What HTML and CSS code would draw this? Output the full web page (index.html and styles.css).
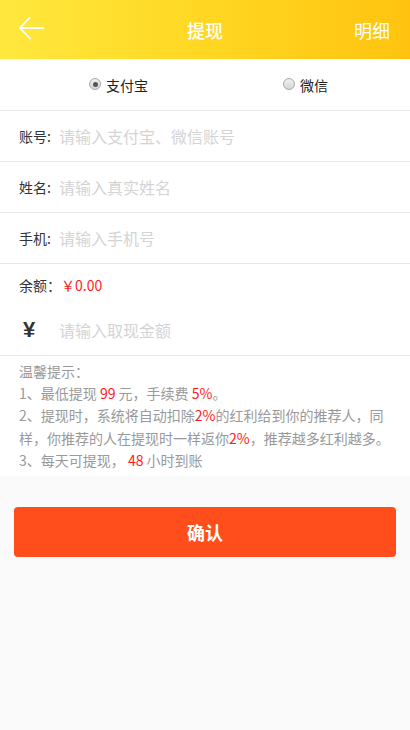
FILE: index.html
```html
<!DOCTYPE html>
<html lang="zh">
<head>
<meta charset="utf-8">
<link rel="stylesheet" href="styles.css">
</head>
<body>
<div class="page">
  <header class="topbar">
    <div class="back">
      <svg width="26" height="26" viewBox="0 0 26 26"><path d="M11 0.5 L1 11 L11.5 22 M1 11 H25" fill="none" stroke="#fff" stroke-width="1.8"/></svg>
    </div>
    <div class="title">提现</div>
    <div class="detail">明细</div>
  </header>

  <section class="panel">
    <div class="radios">
      <label class="radio"><span class="dot checked"></span>支付宝</label>
      <label class="radio"><span class="dot"></span>微信</label>
    </div>
    <div class="row"><span class="label">账号:</span><span class="ph">请输入支付宝、微信账号</span></div>
    <div class="row"><span class="label">姓名:</span><span class="ph">请输入真实姓名</span></div>
    <div class="row"><span class="label">手机:</span><span class="ph">请输入手机号</span></div>
    <div class="balance"><span class="label">余额：</span><span class="red">￥0.00</span></div>
    <div class="row amount"><span class="yen">¥</span><span class="ph">请输入取现金额</span></div>
    <div class="tips">
      温馨提示：<br>
      1、最低提现 <span class="red">99</span> 元，手续费 <span class="red">5%</span>。<br>
      2、提现时，系统将自动扣除<span class="red">2%</span>的红利给到你的推荐人，同<br>
      样，你推荐的人在提现时一样返你<span class="red">2%</span>，推荐越多红利越多。<br>
      3、每天可提现， <span class="red">48</span> 小时到账
    </div>
  </section>

  <div class="actions">
    <button class="confirm">确认</button>
  </div>
</div>
</body>
</html>
```

FILE: styles.css
```css
html, body {
  margin: 0;
  padding: 0;
  background: #fafafa;
  font-family: "Noto Sans CJK SC", "Noto Sans", "Liberation Sans", sans-serif;
}
.page {
  width: 410px;
  min-height: 730px;
  background: #fafafa;
}
.topbar {
  height: 59px;
  display: flex;
  align-items: center;
  justify-content: space-between;
  padding: 0 20px 0 19px;
  background: linear-gradient(90deg, #ffe83e 0%, #ffd925 45%, #ffc30f 100%);
  color: #fff;
  position: relative;
}
.back {
  width: 26px;
  height: 26px;
  display: flex;
  margin-top: 1px;
}
.title {
  position: absolute;
  left: 0;
  right: 0;
  text-align: center;
  font-size: 18px;
  font-weight: 500;
  line-height: 59px;
  pointer-events: none;
  padding-top: 1px;
}
.detail {
  font-size: 18px;
  line-height: 24px;
  padding-top: 1px;
}
.panel {
  background: #fff;
}
.radios {
  height: 51px;
  display: flex;
  align-items: center;
  padding-left: 89px;
  gap: 135px;
  border-bottom: 1px solid #e6e6e6;
  font-size: 14px;
  color: #222;
}
.radio {
  display: flex;
  align-items: center;
  gap: 5px;
  padding-top: 1px;
}
.dot {
  width: 10px;
  height: 10px;
  border-radius: 50%;
  border: 1px solid #a9a9a9;
  background: linear-gradient(180deg, #f0f0f0, #d6d6d6);
  position: relative;
  margin-top: -2px;
}
.dot.checked::after {
  content: "";
  position: absolute;
  left: 2.5px;
  top: 2.5px;
  width: 5px;
  height: 5px;
  border-radius: 50%;
  background: #555;
}
.row {
  height: 50px;
  display: flex;
  align-items: center;
  padding-left: 19px;
  border-bottom: 1px solid #e6e6e6;
}
.label {
  font-size: 14px;
  color: #333;
  width: 40px;
}
.ph {
  font-size: 16px;
  color: #d4d4d4;
}
.balance {
  height: 42px;
  display: flex;
  align-items: center;
  padding-left: 19px;
  font-size: 14px;
  box-sizing: border-box;
}
.balance .label {
  width: auto;
}
.red {
  color: #ff1a1a;
}
.amount {
  height: 48px;
  padding-bottom: 1px;
}
.yen {
  width: 40px;
  font-size: 22px;
  font-weight: bold;
  color: #333;
  padding-left: 4px;
  box-sizing: border-box;
  font-family: "Liberation Sans", sans-serif;
}
.tips {
  padding: 4px 10px 5px 19px;
  font-size: 14px;
  line-height: 22.2px;
  color: #999;
  white-space: nowrap;
}
.actions {
  padding: 31px 14px 0;
}
.confirm {
  width: 100%;
  height: 50px;
  border: none;
  border-radius: 4px;
  background: #ff4e1c;
  color: #fff;
  font-size: 18px;
  font-weight: bold;
  font-family: inherit;
}
```
